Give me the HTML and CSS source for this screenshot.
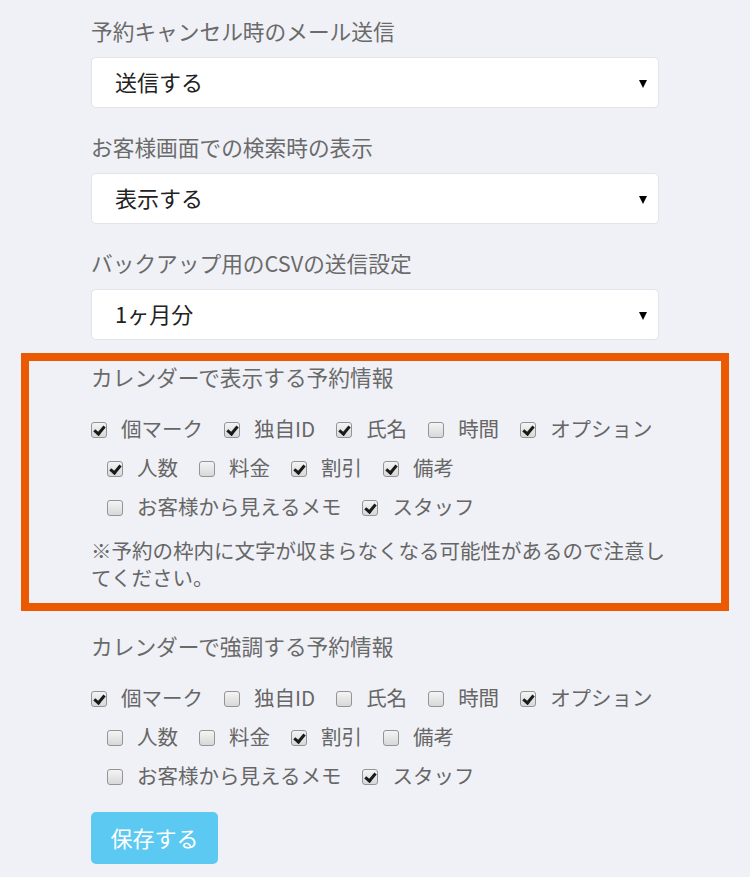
FILE: index.html
```html
<!DOCTYPE html>
<html lang="ja">
<head>
<meta charset="utf-8">
<link rel="stylesheet" href="styles.css">
</head>
<body>
<div class="form">
  <div class="field">
    <div class="label">予約キャンセル時のメール送信</div>
    <div class="select"><span>送信する</span><i class="arrow"></i></div>
  </div>
  <div class="field">
    <div class="label">お客様画面での検索時の表示</div>
    <div class="select"><span>表示する</span><i class="arrow"></i></div>
  </div>
  <div class="field">
    <div class="label">バックアップ用のCSVの送信設定</div>
    <div class="select"><span>1ヶ月分</span><i class="arrow"></i></div>
  </div>

  <div class="highlight">
    <div class="label">カレンダーで表示する予約情報</div>
    <div class="checks">
      <div class="row">
        <label class="check"><span class="cb on"></span>個マーク</label>
        <label class="check"><span class="cb on"></span>独自ID</label>
        <label class="check"><span class="cb on"></span>氏名</label>
        <label class="check"><span class="cb"></span>時間</label>
        <label class="check"><span class="cb on"></span>オプション</label>
      </div>
      <div class="row indent">
        <label class="check"><span class="cb on"></span>人数</label>
        <label class="check"><span class="cb"></span>料金</label>
        <label class="check"><span class="cb on"></span>割引</label>
        <label class="check"><span class="cb on"></span>備考</label>
      </div>
      <div class="row indent">
        <label class="check"><span class="cb"></span>お客様から見えるメモ</label>
        <label class="check"><span class="cb on"></span>スタッフ</label>
      </div>
    </div>
    <p class="note">※予約の枠内に文字が収まらなくなる可能性があるので注意し<br>てください。</p>
  </div>

  <div class="field emph">
    <div class="label">カレンダーで強調する予約情報</div>
    <div class="checks">
      <div class="row">
        <label class="check"><span class="cb on"></span>個マーク</label>
        <label class="check"><span class="cb"></span>独自ID</label>
        <label class="check"><span class="cb"></span>氏名</label>
        <label class="check"><span class="cb"></span>時間</label>
        <label class="check"><span class="cb on"></span>オプション</label>
      </div>
      <div class="row indent">
        <label class="check"><span class="cb"></span>人数</label>
        <label class="check"><span class="cb"></span>料金</label>
        <label class="check"><span class="cb on"></span>割引</label>
        <label class="check"><span class="cb"></span>備考</label>
      </div>
      <div class="row indent">
        <label class="check"><span class="cb"></span>お客様から見えるメモ</label>
        <label class="check"><span class="cb on"></span>スタッフ</label>
      </div>
    </div>
  </div>

  <button class="save">保存する</button>
</div>
</body>
</html>
```

FILE: styles.css
```css
html, body {
  margin: 0;
  padding: 0;
  background: #f0f1f6;
}
body {
  font-family: "Noto Sans CJK JP", "Noto Sans", sans-serif;
  color: #666;
}
.form {
  width: 568px;
  margin: 0 auto;
  padding-top: 19px;
  display: flex;
  flex-direction: column;
}
.field {
  display: flex;
  flex-direction: column;
  margin-bottom: 27px;
}
.field:nth-child(3) {
  margin-bottom: 13px;
}
.label {
  font-size: 21.7px;
  line-height: 24px;
  height: 24px;
  padding-bottom: 6px;
  color: #6a6a6a;
  white-space: nowrap;
}
.select {
  position: relative;
  margin-top: 8px;
  height: 51px;
  box-sizing: border-box;
  background: #fff;
  border: 1px solid #e3e3e8;
  border-radius: 5px;
  padding-left: 23px;
  padding-bottom: 3px;
  display: flex;
  align-items: center;
  font-size: 22px;
  color: #222;
}
.arrow {
  position: absolute;
  right: 11px;
  top: 22px;
  width: 0;
  height: 0;
  border-left: 4.5px solid transparent;
  border-right: 4.5px solid transparent;
  border-top: 8px solid #000;
}
.highlight {
  margin: 0 -70px;
  border: 8px solid #eb5a00;
  padding: 4px 62px 12px;
  display: flex;
  flex-direction: column;
}
.checks {
  margin-top: 15px;
  display: flex;
  flex-direction: column;
}
.row {
  height: 39px;
  display: flex;
  align-items: center;
  gap: 21px;
}
.row.indent {
  padding-left: 16px;
}
.check {
  display: flex;
  align-items: center;
  gap: 14px;
  font-size: 20.5px;
  line-height: 26px;
  color: #666;
  white-space: nowrap;
}
.cb {
  position: relative;
  width: 16px;
  height: 16px;
  margin-top: 4px;
  box-sizing: border-box;
  border: 1px solid #949494;
  border-radius: 3px;
  background: linear-gradient(#f4f4f4, #d8d8d8);
  flex: none;
}
.check {
  padding-bottom: 4px;
}
.cb.on::after {
  content: "";
  position: absolute;
  left: 4px;
  top: 1px;
  width: 4px;
  height: 8px;
  border-right: 3px solid #1a1a1a;
  border-bottom: 3px solid #1a1a1a;
  transform: rotate(40deg);
}
.note {
  margin: 10px 0 0;
  font-size: 20.5px;
  line-height: 27px;
  color: #666;
  white-space: nowrap;
}
.field.emph {
  margin-top: 23px;
  margin-bottom: 16px;
}
.save {
  align-self: flex-start;
  width: 127px;
  height: 52px;
  border: none;
  border-radius: 5px;
  background: #5bc9f1;
  color: #fff;
  font-family: "Noto Sans CJK JP", sans-serif;
  font-size: 22px;
  padding: 0 0 3px;
}
```
